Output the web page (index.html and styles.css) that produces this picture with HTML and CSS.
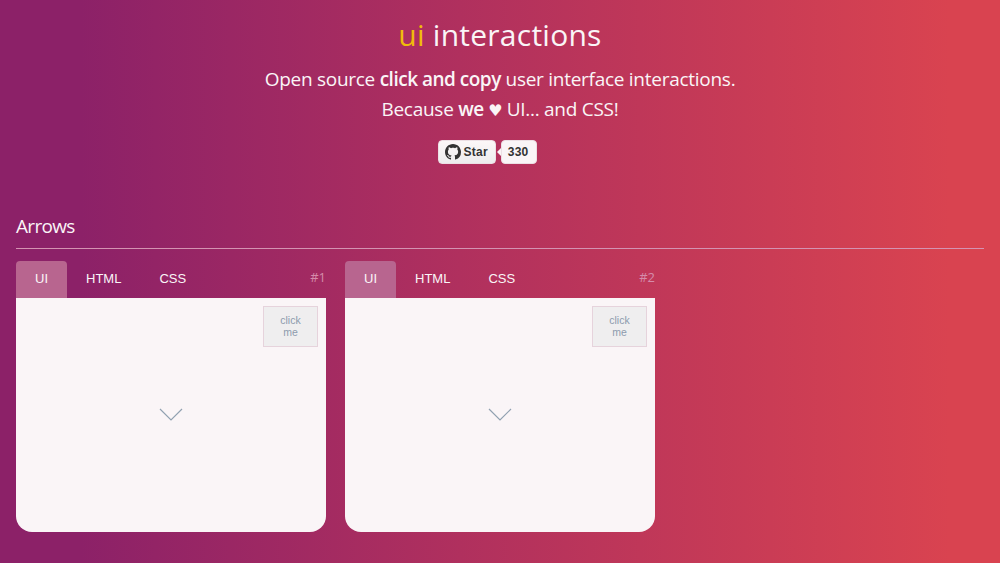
FILE: index.html
```html
<!DOCTYPE html>
<html lang="en">
<head>
    <meta charset="UTF-8">
    <meta name="viewport" content="width=device-width, initial-scale=1.0">
    <title>ui interactions</title>
    <link rel="stylesheet" href="styles.css">
</head>
<body>
    <header class="header">
        <h1 class="title"><span class="highlight">ui</span> interactions</h1>
        <p class="intro"><span class="line">Open source <strong>click and copy</strong> user interface interactions.</span><span class="line">Because <strong>we <span class="heart">♥</span></strong> UI... and CSS!</span></p>
        <div class="github">
            <a class="github-btn" href="#">
                <svg class="github-icon" viewBox="0 0 16 16" aria-hidden="true"><path fill-rule="evenodd" d="M8 0C3.58 0 0 3.58 0 8c0 3.54 2.29 6.53 5.47 7.59.4.07.55-.17.55-.38 0-.19-.01-.82-.01-1.49-2.01.37-2.53-.49-2.69-.94-.09-.23-.48-.94-.82-1.13-.28-.15-.68-.52-.01-.53.63-.01 1.08.58 1.23.82.72 1.21 1.87.87 2.33.66.07-.52.28-.87.51-1.07-1.78-.2-3.64-.89-3.64-3.95 0-.87.31-1.59.82-2.15-.08-.2-.36-1.02.08-2.12 0 0 .67-.21 2.2.82.64-.18 1.32-.27 2-.27s1.36.09 2 .27c1.53-1.04 2.2-.82 2.2-.82.44 1.1.16 1.92.08 2.12.51.56.82 1.27.82 2.15 0 3.07-1.87 3.75-3.65 3.95.29.25.54.73.54 1.48 0 1.07-.01 1.93-.01 2.2 0 .21.15.46.55.38A8.01 8.01 0 0 0 16 8c0-4.42-3.58-8-8-8z"/></svg>
                <span>Star</span>
            </a>
            <a class="github-count" href="#">330</a>
        </div>
    </header>

    <main class="section">
        <h2 class="section-title">Arrows</h2>
        <div class="cards">
            <article class="card">
                <nav class="tabs">
                    <a class="tab active" href="#">UI</a>
                    <a class="tab" href="#">HTML</a>
                    <a class="tab" href="#">CSS</a>
                    <span class="number">#1</span>
                </nav>
                <div class="panel">
                    <svg class="arrow" viewBox="0 0 24 14"><path d="M1 1l11 11L23 1"/></svg>
                    <button class="click-me" type="button">click me</button>
                </div>
            </article>

            <article class="card">
                <nav class="tabs">
                    <a class="tab active" href="#">UI</a>
                    <a class="tab" href="#">HTML</a>
                    <a class="tab" href="#">CSS</a>
                    <span class="number">#2</span>
                </nav>
                <div class="panel">
                    <svg class="arrow" viewBox="0 0 24 14"><path d="M1 1l11 11L23 1"/></svg>
                    <button class="click-me" type="button">click me</button>
                </div>
            </article>
        </div>
    </main>
</body>
</html>
```
FILE: styles.css
```css
:root {
    --light: #faf5f7;
    --heading-font: 'Open Sans', 'Noto Sans', sans-serif;
    --body-font: 'Liberation Sans', Arial, sans-serif;
}

* {
    box-sizing: border-box;
    margin: 0;
    padding: 0;
}

body {
    min-height: 100vh;
    padding: 0 16px;
    background: linear-gradient(to right, #8c2168 8%, #b0305e 46%, #d94350 95%);
    color: var(--light);
    font-family: var(--body-font);
    overflow: hidden;
}

a {
    color: inherit;
    text-decoration: none;
}

.header {
    display: flex;
    flex-direction: column;
    align-items: center;
    padding-top: 15px;
}

.title {
    font-family: var(--heading-font);
    font-size: 30px;
    font-weight: 400;
    line-height: 40px;
    letter-spacing: 0.25px;
}

.highlight {
    color: #f0bb0a;
}

.intro {
    margin-top: 9px;
    font-family: var(--heading-font);
    font-size: 19px;
    line-height: 30px;
    letter-spacing: -0.27px;
    text-align: center;
}

.line {
    display: block;
}

.intro strong {
    font-weight: 600;
    letter-spacing: -0.5px;
}

.heart {
    font-family: 'DejaVu Sans', sans-serif;
    font-size: 16px;
    line-height: 1;
}

.github {
    display: flex;
    gap: 5px;
    margin-top: 16px;
    margin-right: 25px;
    color: #333;
    font-size: 12px;
    font-weight: 700;
    line-height: 22px;
    letter-spacing: 0.2px;
}

.github-btn,
.github-count {
    display: flex;
    align-items: center;
    height: 24px;
    border: 1px solid #ecdfe4;
    border-radius: 4px;
}

.github-btn {
    gap: 3px;
    padding: 0 7px 0 6px;
    background: linear-gradient(#fcf7f8, #ededee);
}

.github-icon {
    width: 16px;
    height: 16px;
    fill: #333;
}

.github-count {
    position: relative;
    padding: 0 8px 0 6px;
    background-color: var(--light);
}

.github-count::before {
    content: '';
    position: absolute;
    top: 7px;
    left: -5px;
    border: 4px solid transparent;
    border-left-width: 0;
    border-right-color: var(--light);
}

.section {
    padding-top: 47px;
}

.section-title {
    height: 38px;
    border-bottom: 1px solid #d493b2;
    font-family: var(--heading-font);
    font-size: 19px;
    font-weight: 400;
    line-height: 30px;
    letter-spacing: -0.7px;
}

.cards {
    display: grid;
    grid-template-columns: repeat(3, 1fr);
    gap: 19px;
    margin-top: 12px;
}

.tabs {
    display: flex;
    height: 37px;
}

.tab {
    padding: 0 19px;
    border-radius: 4px 4px 0 0;
    font-size: 13px;
    line-height: 36px;
}

.tab.active {
    background-color: #b8658f;
}

.number {
    margin-left: auto;
    color: #d58baa;
    font-family: var(--heading-font);
    font-size: 13px;
    line-height: 33px;
}

.panel {
    position: relative;
    display: flex;
    align-items: center;
    justify-content: center;
    height: 234px;
    border-radius: 0 0 16px 16px;
    background-color: var(--light);
}

.arrow {
    width: 24px;
    height: 14px;
    fill: none;
    stroke: #91a1b1;
    stroke-width: 1.2;
}

.click-me {
    position: absolute;
    top: 8px;
    right: 8px;
    width: 55px;
    height: 41px;
    padding: 0 12px 2px;
    border: 1px solid #e6d3dc;
    background-color: #efeeef;
    color: #8d9bad;
    font-family: var(--body-font);
    font-size: 10.5px;
    line-height: 12px;
}
```
